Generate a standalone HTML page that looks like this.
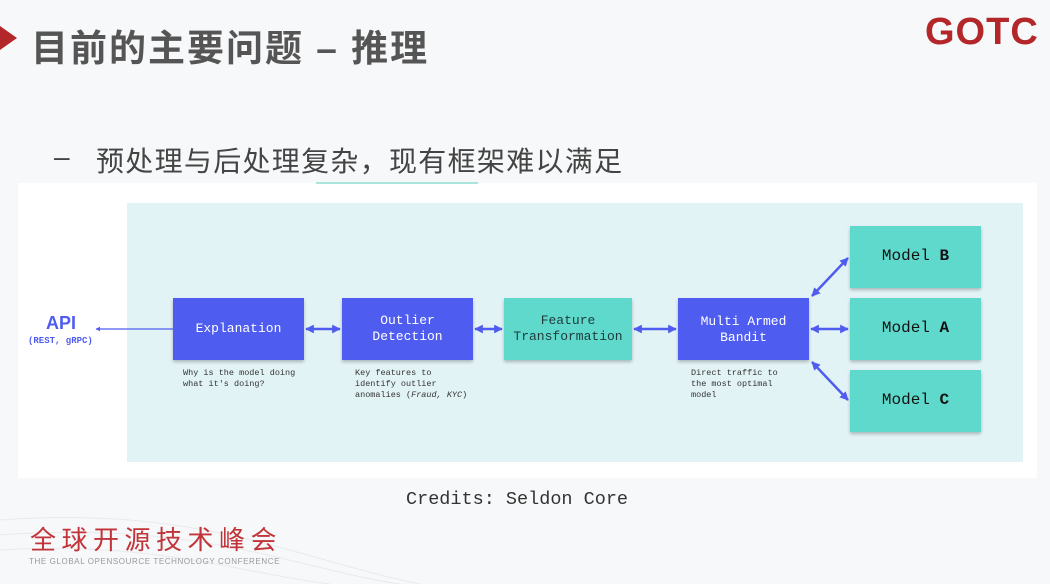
<!DOCTYPE html>
<html><head><meta charset="utf-8"><style>
html,body{margin:0;padding:0;}
body{width:1050px;height:584px;overflow:hidden;background:#f7f8f9;position:relative;font-family:"Liberation Sans","Noto Sans CJK SC",sans-serif;}
.t{position:absolute;white-space:nowrap;}
</style></head><body>
<svg width="1050" height="584" style="position:absolute;left:0;top:0" xmlns="http://www.w3.org/2000/svg">
<defs>
<marker id="ah" viewBox="0 0 10 10" refX="9" refY="5" markerWidth="3.5" markerHeight="3.5" orient="auto-start-reverse"><path d="M0,0L10,5L0,10z" fill="#4f5cf0"/></marker>
<filter id="sh" x="-10%" y="-10%" width="120%" height="130%"><feDropShadow dx="0" dy="2" stdDeviation="1.5" flood-opacity="0.25"/></filter>
</defs>
<g stroke="#e9eaec" stroke-width="1" fill="none">
<path d="M0,520 C200,505 300,560 420,584"/><path d="M0,535 C200,520 300,570 400,584"/><path d="M0,550 C150,540 250,575 330,584"/>
</g>
<polygon points="0,26 17,38 0,50" fill="#b3262a"/>
<rect x="18" y="183" width="1019" height="295" fill="#ffffff"/>
<line x1="316" y1="183" x2="478" y2="183" stroke="#8fdcd0" stroke-width="1.5"/>
<rect x="127" y="203" width="896" height="259" fill="#e2f3f6"/>
<g filter="url(#sh)">
<rect x="173" y="298" width="131" height="62" fill="#4f5cf0"/>
<rect x="342" y="298" width="131" height="62" fill="#4f5cf0"/>
<rect x="504" y="298" width="128" height="62" fill="#5fd9cc"/>
<rect x="678" y="298" width="131" height="62" fill="#4f5cf0"/>
<rect x="850" y="226" width="131" height="62" fill="#5fd9cc"/>
<rect x="850" y="298" width="131" height="62" fill="#5fd9cc"/>
<rect x="850" y="370" width="131" height="62" fill="#5fd9cc"/>
</g>
<g stroke="#4f5cf0" stroke-width="2.5" fill="none">
<line x1="173" y1="329" x2="96" y2="329" stroke-width="1.3" marker-end="url(#ah)"/>
<line x1="306" y1="329" x2="340" y2="329" marker-start="url(#ah)" marker-end="url(#ah)"/>
<line x1="475" y1="329" x2="502" y2="329" marker-start="url(#ah)" marker-end="url(#ah)"/>
<line x1="634" y1="329" x2="676" y2="329" marker-start="url(#ah)" marker-end="url(#ah)"/>
<line x1="811" y1="329" x2="848" y2="329" marker-start="url(#ah)" marker-end="url(#ah)"/>
<line x1="812" y1="296" x2="848" y2="258" marker-start="url(#ah)" marker-end="url(#ah)"/>
<line x1="812" y1="362" x2="848" y2="400" marker-start="url(#ah)" marker-end="url(#ah)"/>
</g>
</svg>
<div class="t" style="left:31px;top:18px;font-size:37px;font-weight:bold;color:#555;letter-spacing:2px">目前的主要问题 – 推理</div>
<div class="t" style="left:925px;top:11px;font-size:38px;font-weight:bold;color:#b3262a;letter-spacing:1px">GOTC</div>
<div class="t" style="left:54px;top:141px;font-size:28px;color:#444">–</div>
<div class="t" style="left:96px;top:140px;font-size:28px;color:#444;letter-spacing:1.3px">预处理与后处理复杂，现有框架难以满足</div>
<div class="t" style="left:30px;top:520px;font-size:26px;color:#c0343a;letter-spacing:5.5px">全球开源技术峰会</div>
<div class="t" style="left:29px;top:557px;font-size:8px;color:#999;letter-spacing:0.6px">THE GLOBAL OPENSOURCE TECHNOLOGY CONFERENCE</div>
<div style="position:absolute;left:0;top:0;width:1050px;height:584px;font-family:'Liberation Mono',monospace;">
<div class="t" style="left:46px;top:313px;font-size:18px;font-weight:bold;color:#4f5cf0;font-family:'Liberation Sans',sans-serif">API</div>
<div class="t" style="left:28px;top:336px;font-size:9px;font-weight:bold;color:#4f5cf0">(REST, gRPC)</div>
<div class="t" style="left:173px;width:131px;top:321px;font-size:13px;color:#fff;text-align:center">Explanation</div>
<div class="t" style="left:342px;width:131px;top:313px;font-size:13px;color:#fff;text-align:center;line-height:16px">Outlier<br>Detection</div>
<div class="t" style="left:504px;width:128px;top:313px;font-size:13px;color:#1f3a3a;text-align:center;line-height:16px">Feature<br>Transformation</div>
<div class="t" style="left:678px;width:131px;top:314px;font-size:13px;color:#fff;text-align:center;line-height:16px">Multi Armed<br>Bandit</div>
<div class="t" style="left:850px;width:131px;top:247px;font-size:16px;color:#111;text-align:center">Model <b>B</b></div>
<div class="t" style="left:850px;width:131px;top:319px;font-size:16px;color:#111;text-align:center">Model <b>A</b></div>
<div class="t" style="left:850px;width:131px;top:391px;font-size:16px;color:#111;text-align:center">Model <b>C</b></div>
<div class="t" style="left:183px;top:368px;font-size:8.5px;color:#333;line-height:11px">Why is the model doing<br>what it's doing?</div>
<div class="t" style="left:355px;top:368px;font-size:8.5px;color:#333;line-height:11px">Key features to<br>identify outlier<br>anomalies (<i>Fraud, KYC</i>)</div>
<div class="t" style="left:691px;top:368px;font-size:8.5px;color:#333;line-height:11px">Direct traffic to<br>the most optimal<br>model</div>
<div class="t" style="left:406px;top:489px;font-size:18.5px;color:#333">Credits: Seldon Core</div>
</div>
</body></html>
